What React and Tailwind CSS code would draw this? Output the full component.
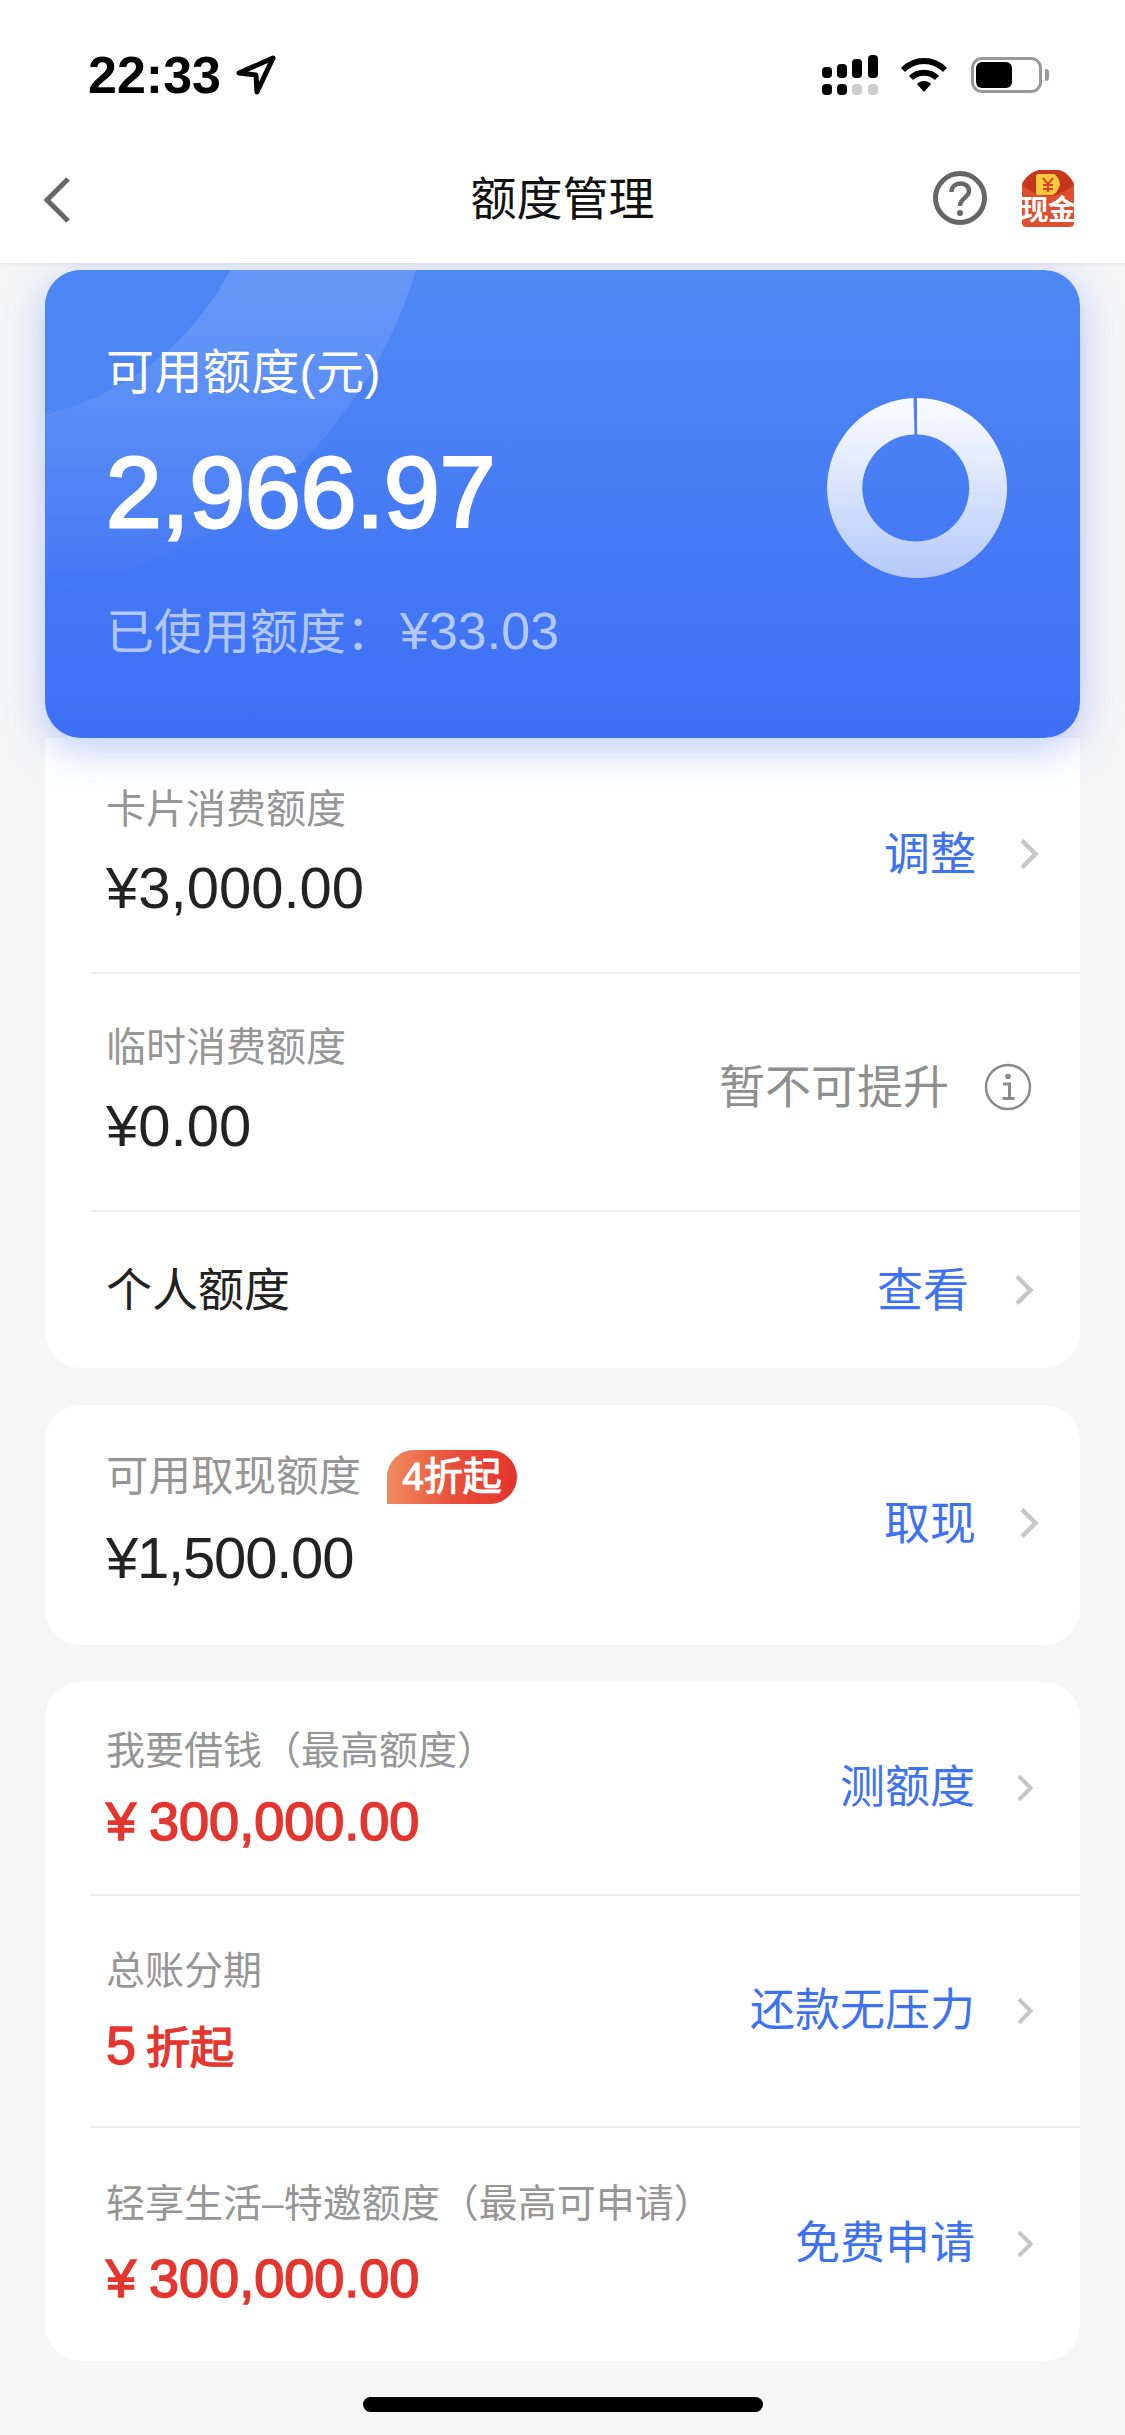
import React from "react";

const FONT = "font-['Liberation_Sans','Noto_Sans_CJK_SC',sans-serif]";

function Chevron({ className }) {
  return (
    <svg viewBox="0 0 20 32" className={className} fill="none" stroke="#c6c6cb" strokeWidth="4.5">
      <path d="M3 2.5 L16.5 16 L3 29.5" strokeLinejoin="miter" />
    </svg>
  );
}

function StatusBar() {
  return (
    <div className="flex h-[108px] items-center justify-between pl-[88px] pr-[76px] pt-[42px]">
      <div className="flex items-center gap-[15px]">
        <span className="text-[52px] leading-[50px] font-bold text-black">22:33</span>
        <svg viewBox="0 0 40 40" className="h-[40px] w-[40px]" fill="none" stroke="#000" strokeWidth="5" strokeLinejoin="round">
          <path d="M37 3 L3 18 L20 20 L21 37 Z" />
        </svg>
      </div>
      <div className="flex items-center">
        <svg viewBox="0 0 58 40" className="h-[40px] w-[58px]">
          <rect x="0" y="12" width="10" height="11" rx="4" fill="#000" />
          <rect x="15" y="9" width="10" height="14" rx="4" fill="#000" />
          <rect x="30" y="4" width="10" height="19" rx="4" fill="#000" />
          <rect x="46" y="0" width="10" height="23" rx="4" fill="#000" />
          <rect x="0" y="29" width="10" height="11" rx="4" fill="#000" />
          <rect x="15" y="29" width="10" height="11" rx="4" fill="#000" />
          <rect x="30" y="29" width="10" height="11" rx="4" fill="#cccccc" />
          <rect x="46" y="29" width="10" height="11" rx="4" fill="#cccccc" />
        </svg>
        <svg viewBox="0 0 48 36" className="ml-[20px] h-[36px] w-[48px]" fill="none" stroke="#000" strokeWidth="6">
          <path d="M3 13 C15 1 33 1 45 13" />
          <path d="M11 21 C18 14 30 14 37 21" />
          <path d="M17 27 L24 35 L31 27 C27 23 21 23 17 27 Z" fill="#000" stroke="none" />
        </svg>
        <div className="ml-[23px] flex h-[36px] w-[71px] items-center rounded-[11px] border-[3px] border-[#999999] p-[2px]">
          <div className="h-full w-[36px] rounded-[6px] bg-black" />
        </div>
        <div className="ml-[3px] h-[12px] w-[4px] rounded-r-[3px] bg-[#999999]" />
      </div>
    </div>
  );
}

function CashIcon() {
  return (
    <div className="relative h-[58px] w-[56px]">
      <svg viewBox="0 0 56 58" className="absolute inset-0 h-[58px] w-[56px]">
        <path d="M2 14 C6 6 14 0 22 0 H36 C44 0 50 6 54 14 V53 C54 56 52 57 50 57 H6 C4 57 2 56 2 53 Z" fill="#dd4f30" />
        <path d="M2 14 C6 6 14 0 22 0 H36 C44 0 50 6 54 14 C46 22 38 26 28 26 C18 26 10 22 2 14 Z" fill="#c8351f" />
        <path d="M16 6 C16 5 17 4 18 4 H34 C38 6 40 12 40 15 C38 20 36 24 32 25 H18 C17 25 16 24 16 23 Z" fill="#f7c93c" />
        <path d="M23 8 L28 14 L33 8 M28 14 V22 M23 15 H33 M23 19 H33" fill="none" stroke="#d9432a" strokeWidth="2" />
      </svg>
      <div className="absolute left-[-2px] top-[26px] w-[60px] text-center text-[28px] leading-[30px] font-bold tracking-[-0.5px] whitespace-nowrap text-white">
        现金
      </div>
    </div>
  );
}

function NavBar() {
  return (
    <div className="relative flex h-[155px] items-center justify-center pt-[26px]">
      <svg viewBox="0 0 27 46" className="absolute left-[43px] top-[69px] h-[46px] w-[27px]" fill="none" stroke="#666666" strokeWidth="5">
        <path d="M25 2 L4 23 L25 44" />
      </svg>
      <span className="text-[46px] leading-[60px] text-[#111111]">额度管理</span>
      <svg viewBox="0 0 54 54" className="absolute left-[933px] top-[63px] h-[54px] w-[54px]" fill="none" stroke="#666666" strokeWidth="5">
        <circle cx="27" cy="27" r="24.5" />
        <path d="M18.5 21 C18.5 9.5 36 10 36 20 C36 26.5 27 27 27 35" strokeWidth="4.5" />
        <circle cx="27" cy="42" r="3" fill="#666666" stroke="none" />
      </svg>
      <div className="absolute left-[1020px] top-[62px]">
        <CashIcon />
      </div>
    </div>
  );
}

function Donut() {
  return (
    <svg viewBox="0 0 180 180" className="h-[180px] w-[180px]">
      <defs>
        <linearGradient id="ring" x1="0" y1="0" x2="0" y2="1">
          <stop offset="0" stopColor="#ffffff" stopOpacity="0.98" />
          <stop offset="1" stopColor="#ffffff" stopOpacity="0.6" />
        </linearGradient>
      </defs>
      <path
        d="M90 0 A90 90 0 1 1 86.5 0.07 L87.5 36.5 A53.5 53.5 0 1 0 90 36.5 Z"
        fill="url(#ring)"
        fillRule="evenodd"
      />
    </svg>
  );
}

function BalanceCard() {
  return (
    <div className="relative z-10 mt-[7px] flex h-[468px] overflow-hidden rounded-[36px] bg-gradient-to-b from-[#4f89f5] to-[#3e6ff5] shadow-[0_10px_40px_rgba(62,111,245,0.36)]">
      <div className="absolute left-[-520px] top-[-585px] h-[910px] w-[910px] rounded-full bg-gradient-to-b from-[#ffffff20] from-70% to-[#ffffff00] to-100%" />
      <div className="absolute left-[-347px] top-[-412px] h-[564px] w-[564px] rounded-full bg-[#4c86f5]" />
      <div className="relative flex flex-1 flex-col pl-[61px]">
        <div className="mt-[73px] text-[48px] leading-[60px] tracking-[0.4px] text-white">可用额度(元)</div>
        <div className="mt-[34px] text-[100px] leading-[110px] text-white [-webkit-text-stroke:3px_white]">2,966.97</div>
        <div className="mt-[54px] text-[48px] leading-[60px] text-white/60">
          已使用额度：<span className="ml-[6px] text-[52px]">¥33.03</span>
        </div>
      </div>
      <div className="relative mr-[73px] mt-[128px]">
        <Donut />
      </div>
    </div>
  );
}

function Label({ children }) {
  return <div className="text-[39px] leading-[46px] text-[#969696]">{children}</div>;
}

function Amount({ children }) {
  return <div className="mt-[28px] text-[58px] leading-[56px] text-[#222222]">{children}</div>;
}

function RedAmount({ className }) {
  return (
    <div className={`flex items-baseline text-[54px] leading-[56px] text-[#e5352f] [-webkit-text-stroke:1.6px_#e5352f] ${className}`}>
      <span className="mr-[13px]">¥</span>300,000.00
    </div>
  );
}

function Action({ children }) {
  return <span className="text-[46px] leading-[60px] text-[#3e72f2]">{children}</span>;
}

function SmallAction({ children }) {
  return (
    <div className="flex items-center">
      <span className="text-[45px] leading-[60px] text-[#3e72f2]">{children}</span>
      <Chevron className="ml-[41px] mr-[46px] h-[28px] w-[18px]" />
    </div>
  );
}

function App() {
  return (
    <div className={`${FONT} h-[2435px] w-[1125px] overflow-hidden bg-[#f6f6f6]`}>
      <header className="relative z-20 h-[263px] bg-white shadow-[0_1px_6px_rgba(0,0,0,0.08)]">
        <StatusBar />
        <NavBar />
      </header>

      <main className="px-[45px]">
        <BalanceCard />

        <section className="rounded-b-[36px] bg-white pl-[45px]">
          <div className="flex h-[236px] items-center justify-between border-b-2 border-[#eeeeee] pl-[16px] pb-[2px]">
            <div className="mt-[-6px]">
              <div className="text-[40px] leading-[46px] text-[#969696]">卡片消费额度</div>
              <Amount>¥3,000.00</Amount>
            </div>
            <div className="flex items-center">
              <Action>调整</Action>
              <Chevron className="ml-[43px] mr-[41px] h-[32px] w-[20px]" />
            </div>
          </div>
          <div className="flex h-[238px] items-center justify-between border-b-2 border-[#eeeeee] pl-[16px]">
            <div className="mt-[-6px]">
              <div className="text-[40px] leading-[46px] text-[#969696]">临时消费额度</div>
              <Amount>¥0.00</Amount>
            </div>
            <div className="mb-[10px] flex items-center">
              <span className="text-[46px] leading-[60px] text-[#8f8f8f]">暂不可提升</span>
              <svg viewBox="0 0 48 48" className="ml-[35px] mr-[48px] h-[48px] w-[48px]" fill="none" stroke="#8a8a8a" strokeWidth="2.5">
                <circle cx="24" cy="24" r="22" />
                <circle cx="24" cy="13.5" r="2.8" fill="#8a8a8a" stroke="none" />
                <path d="M19 21 H25.5 V35 M18.5 35.5 H30.5" strokeWidth="3" />
              </svg>
            </div>
          </div>
          <div className="flex h-[156px] items-center justify-between pl-[16px]">
            <span className="text-[46px] leading-[60px] text-[#222222]">个人额度</span>
            <div className="flex items-center">
              <Action>查看</Action>
              <Chevron className="ml-[45px] mr-[46px] h-[32px] w-[20px]" />
            </div>
          </div>
        </section>

        <section className="mt-[37px] flex h-[240px] items-center justify-between rounded-[36px] bg-white pl-[61px]">
          <div className="mt-[-14px]">
            <div className="flex items-center">
              <div className="text-[42.5px] leading-[54px] text-[#969696]">可用取现额度</div>
              <div className="ml-[26px] flex h-[54px] w-[130px] items-center justify-center rounded-t-[27px] rounded-br-[27px] bg-gradient-to-r from-[#ef8a5f] via-[#e9503a] to-[#e5322d] text-[39px] text-white [-webkit-text-stroke:1px_white]">
                4折起
              </div>
            </div>
            <div className="mt-[26px] text-[58px] leading-[56px] tracking-[-1.2px] text-[#222222]">¥1,500.00</div>
          </div>
          <div className="mb-[4px] flex items-center">
            <Action>取现</Action>
            <Chevron className="ml-[43px] mr-[41px] h-[32px] w-[20px]" />
          </div>
        </section>

        <section className="mt-[37px] h-[679px] rounded-[36px] bg-white pl-[45px]">
          <div className="flex h-[214px] items-center justify-between border-b-2 border-[#eeeeee] pl-[16px]">
            <div>
              <Label>我要借钱（最高额度）</Label>
              <RedAmount className="mt-[19px]" />
            </div>
            <SmallAction>测额度</SmallAction>
          </div>
          <div className="flex h-[232px] items-center justify-between border-b-2 border-[#eeeeee] pl-[16px]">
            <div className="mt-[3px]">
              <Label>总账分期</Label>
              <div className="mt-[23px] flex items-baseline text-[44px] leading-[56px] text-[#e5352f] [-webkit-text-stroke:1.4px_#e5352f]">
                <span className="mr-[10px] text-[54px]">5</span>折起
              </div>
            </div>
            <SmallAction>还款无压力</SmallAction>
          </div>
          <div className="flex h-[231px] items-center justify-between pl-[16px]">
            <div>
              <Label>轻享生活–特邀额度（最高可申请）</Label>
              <RedAmount className="mt-[23px]" />
            </div>
            <SmallAction>免费申请</SmallAction>
          </div>
        </section>
      </main>

      <div className="mx-auto mt-[36px] h-[15px] w-[400px] rounded-full bg-black" />
    </div>
  );
}

export default App;
